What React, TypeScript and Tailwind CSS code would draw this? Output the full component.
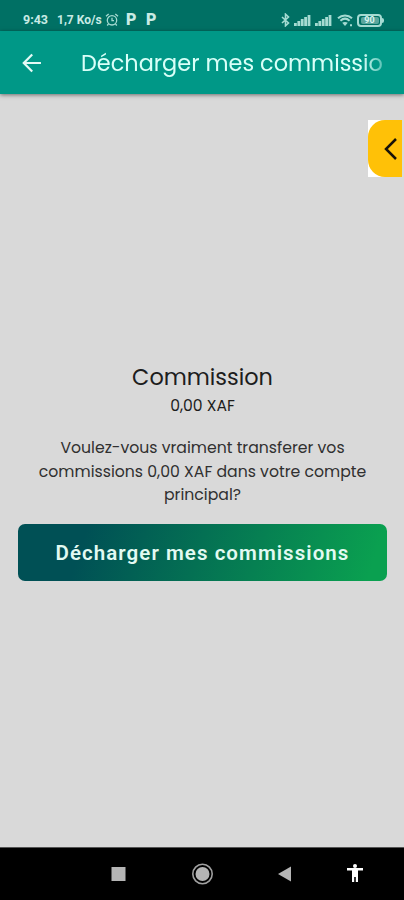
import type { ReactNode } from "react"

const bars = [3, 5, 7, 9, 11]

function Signal() {
  return (
    <svg width="17" height="12" viewBox="0 0 17 12" fill="#a5dbd2">
      {bars.map((h, i) => (
        <rect key={h} x={i * 3.4} y={12 - h} width="2.8" height={h} />
      ))}
    </svg>
  )
}

function StatusBar() {
  return (
    <div className="flex h-[31px] items-center bg-[#007064] pt-[9px] pr-5 pl-[23px] font-['Roboto',sans-serif] text-[12.5px] font-bold text-[#c9ebe5]">
      <span className="w-[34px] whitespace-nowrap">9:43</span>
      <span className="w-[48px] text-[12px] whitespace-nowrap">1,7 Ko/s</span>
      <svg width="14" height="14" viewBox="0 0 13 14" fill="none" stroke="#a5dbd2" strokeWidth="1.3">
        <circle cx="6.5" cy="7.3" r="4.7" />
        <path d="M6.5 4.8v2.8h2M.5 3.3 3.2.9M12.5 3.3 9.8.9M3 11l-1.3 1.5M10 11l1.3 1.5" />
      </svg>
      <span className="ml-[7px] w-5 text-[16px] leading-none font-black">P</span>
      <span className="text-[16px] leading-none font-black">P</span>

      <div className="ml-auto flex items-center">
        <svg width="9" height="14" viewBox="0 0 9 14" fill="none" stroke="#a5dbd2" strokeWidth="1.6">
          <path d="M1 4l6.5 6-3 2.8V1.2l3 2.8L1 10" />
        </svg>
        <div className="ml-1 flex gap-1">
          <Signal />
          <Signal />
        </div>
        <svg className="ml-[5px]" width="17" height="13" viewBox="0 0 17 13" fill="none" stroke="#a5dbd2" strokeWidth="2">
          <path d="M1 4.3c4-3.8 10-3.8 14 0M3.4 6.8c2.8-2.6 6.400-2.600 9.200 0" />
          <path d="M5.2 8.8c1.700-1.200 3.900-1.200 5.600 0L8 12z" fill="#a5dbd2" stroke="none" />
          <path d="M13 11.3h2" />
        </svg>
        <div className="ml-[3px] flex h-[13px] w-[25px] items-center justify-center rounded-[4px] border-2 border-[#a5dbd2]">
          <span className="flex h-[7px] w-[18px] items-center justify-center rounded-[2px] bg-[#5aa69d] text-[9px] leading-none text-[#d9f5f0]">90</span>
        </div>
        <div className="h-[5px] w-[2px] rounded-r-sm bg-[#a5dbd2]" />
      </div>
    </div>
  )
}

function AppBar() {
  return (
    <header className="z-10 flex h-[63px] items-center bg-[#009887] pl-[22px] shadow-[0_1px_4px_rgba(0,0,0,0.5)]">
      <svg width="20" height="20" viewBox="0 0 19 19" fill="none" stroke="#e4faf6" strokeWidth="2.1">
        <path d="M18 9.5H2M9.7 1.5l-8 8 8 8" />
      </svg>
      <h1 className="ml-[39px] w-fit text-[22.4px] leading-8 whitespace-nowrap text-[#d8fff8] [mask-image:linear-gradient(to_right,black_93%,rgba(0,0,0,0.4))]">
        Décharger mes commissio
      </h1>
    </header>
  )
}

function Line({ children }: { children: ReactNode }) {
  return <span className="block whitespace-nowrap">{children}</span>
}

function NavBar() {
  return (
    <nav className="h-[53px] border-t border-[#555] bg-black">
      <svg width="404" height="52" viewBox="0 0 404 52">
        <rect x="111.5" y="19" width="14" height="14" fill="#b5b5b5" />
        <circle cx="202.5" cy="26" r="9.7" fill="none" stroke="#a0a0a0" strokeWidth="1.6" />
        <circle cx="202.5" cy="26" r="7" fill="#b5b5b5" />
        <path d="M278 26l13-7.5v15z" fill="#b5b5b5" />
        <g fill="#fff">
          <circle cx="355" cy="18" r="2" />
          <path d="M347 20h16v2.4h-5V34h-2.2v-5h-1.600v5H352V22.400h-5z" />
        </g>
      </svg>
    </nav>
  )
}

export default function App() {
  return (
    <div className="flex h-[900px] w-[404px] flex-col overflow-hidden bg-[#d9d9d9] font-['Poppins','Inter',sans-serif]">
      <StatusBar />
      <AppBar />
      <main className="relative flex-1">
        <button className="absolute top-[26px] right-[2px] h-[57px] w-[34px] bg-white">
          <span className="flex h-full w-full items-center justify-end rounded-l-[17px] bg-[#ffc107] pr-[5px]">
            <svg width="13" height="22" viewBox="0 0 13 22" fill="none" stroke="#17130a" strokeWidth="2.5">
              <path d="M12 1 2 11l10 10" />
            </svg>
          </span>
        </button>

        <div className="flex flex-col items-center pt-[267px] pr-[17px] pl-[18px] text-[#1d1d1d]">
          <h2 className="text-[22.4px] leading-8">Commission</h2>
          <p className="mt-[2px] text-[15.6px] leading-[22px]">0,00 XAF</p>
          <p className="mt-[19px] text-center text-[15.7px] leading-[23.5px] text-[#303030]">
            <Line>Voulez-vous vraiment transferer vos</Line>
            <Line>commissions 0,00 XAF dans votre compte</Line>
            <Line>principal?</Line>
          </p>
          <button className="mt-[17px] h-[57px] w-full rounded-[7px] bg-linear-[108deg,#005055_18%,#0aa050_95%] pt-[2px] font-['Roboto',sans-serif] text-[20.5px] font-semibold tracking-[1.05px] whitespace-nowrap text-[#e2faf2]">
            Décharger mes commissions
          </button>
        </div>
      </main>
      <NavBar />
    </div>
  )
}
